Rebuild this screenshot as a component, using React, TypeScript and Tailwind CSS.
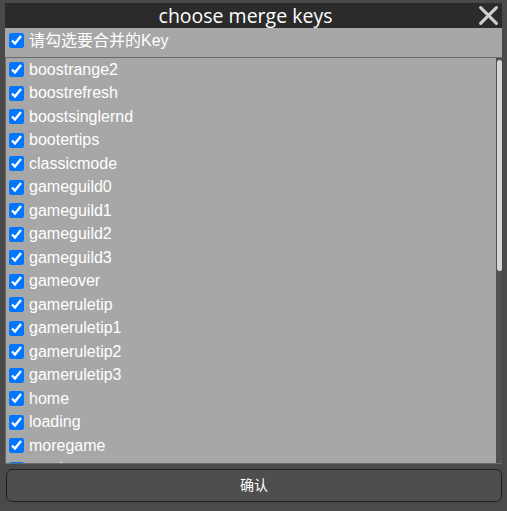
import { useState } from "react";

const keys = [
    "boostrange2",
    "boostrefresh",
    "boostsinglernd",
    "bootertips",
    "classicmode",
    "gameguild0",
    "gameguild1",
    "gameguild2",
    "gameguild3",
    "gameover",
    "gameruletip",
    "gameruletip1",
    "gameruletip2",
    "gameruletip3",
    "home",
    "loading",
    "moregame",
    "music",
    "newrecord",
    "pause",
    "rank",
    "restart",
    "revive",
    "score",
    "setting",
    "share",
    "shop",
    "skin",
    "sound",
    "start",
    "tips",
    "title",
    "unlock",
];

export default function App() {
    const [checked, setChecked] = useState<Record<string, boolean>>(
        Object.fromEntries(keys.map((k) => [k, true]))
    );
    const allChecked = keys.every((k) => checked[k]);

    const toggleAll = () => {
        const next = !allChecked;
        setChecked(Object.fromEntries(keys.map((k) => [k, next])));
    };

    return (
        <div className="w-[507px] h-[511px] bg-[#4a4a4a] pt-[3px] px-[5px] flex flex-col font-['Liberation_Sans','Noto_Sans_CJK_SC',sans-serif]">
            {/* title bar */}
            <div className="relative h-[25px] bg-[#2b2b2b] flex items-center justify-center pr-[16px]">
                <span className="text-white text-[19.5px] leading-none font-['Open_Sans','Noto_Sans_CJK_SC',sans-serif]">
                    choose merge keys
                </span>
                <button className="absolute right-[3px] top-[2px] w-[21px] h-[21px] text-[#cfcfcf]" title="close">
                    <svg viewBox="0 0 20 20" className="w-full h-full" stroke="currentColor" strokeWidth={3} strokeLinecap="round">
                        <path d="M2.5 2.5l15 15M17.5 2.5l-15 15" />
                    </svg>
                </button>
            </div>

            {/* select all */}
            <div className="h-[29px] bg-[#a7a7a7] pl-[4px] pt-[1px]">
                <label className="h-[23.5px] flex items-center text-white text-[16px]">
                    <input
                        type="checkbox"
                        checked={allChecked}
                        onChange={toggleAll}
                        className="w-[15px] h-[15px] mr-[5px] accent-[#0075ff]"
                    />
                    请勾选要合并的Key
                </label>
            </div>

            {/* key list */}
            <div className="h-[407px] bg-[#a7a7a7] border-t border-l border-b border-[#6a6a6a] flex">
                <div className="flex-1 overflow-hidden">
                    {keys.map((k) => (
                        <label key={k} className="h-[23.5px] pl-[3px] flex items-center text-white text-[16px]">
                            <input
                                type="checkbox"
                                checked={checked[k]}
                                onChange={() => setChecked({ ...checked, [k]: !checked[k] })}
                                className="w-[15px] h-[15px] mr-[5px] accent-[#0075ff]"
                            />
                            {k}
                        </label>
                    ))}
                </div>
                {/* scrollbar */}
                <div className="w-[6px] bg-[#525252] pt-[2px] pb-[1px]">
                    <div className="h-[211px] mx-[0.5px] bg-[#d6d6d6] rounded-[3px]" />
                </div>
            </div>

            {/* confirm */}
            <button className="mt-[5px] ml-[1px] h-[33px] bg-[#4e4e4e] border border-[#1f1f1f] rounded-[6px] text-white text-[14px]">
                确认
            </button>
        </div>
    );
}
